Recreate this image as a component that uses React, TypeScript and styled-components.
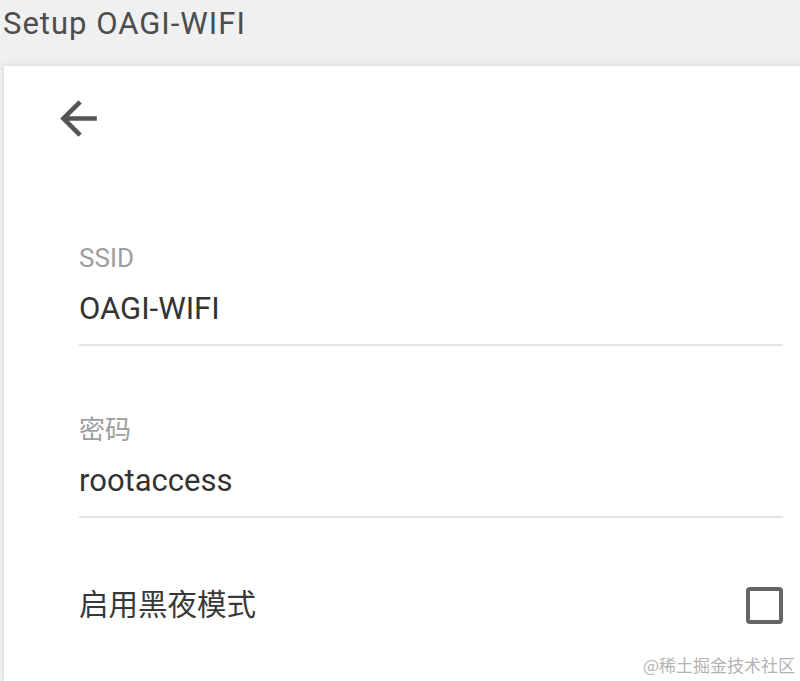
import React from "react";
import styled, { createGlobalStyle } from "styled-components";

const GlobalStyle = createGlobalStyle`
  html, body {
    margin: 0;
    padding: 0;
    background: #f0f0f0;
    overflow: hidden;
  }
  body {
    font-family: Roboto, "Noto Sans CJK SC", sans-serif;
  }
`;

const Page = styled.div`
  position: relative;
  width: 800px;
  height: 681px;
  display: flex;
  flex-direction: column;
  background: #f0f0f0;
  overflow: hidden;
`;

const Header = styled.header`
  height: 66px;
  flex: none;
  display: flex;
  align-items: flex-start;
  padding: 8px 0 0 3px;
  box-sizing: border-box;
`;

const Title = styled.h1`
  margin: 0;
  font-size: 31px;
  line-height: 31px;
  font-weight: 400;
  letter-spacing: 1px;
  color: #4d4d4d;
`;

const Card = styled.main`
  flex: 1;
  margin-left: 4px;
  margin-right: -10px;
  background: #ffffff;
  box-shadow: 0 -2px 6px rgba(0, 0, 0, 0.07), -1px 0 2px rgba(0, 0, 0, 0.06);
  display: flex;
  flex-direction: column;
  padding: 25px 27px 0 47px;
`;

const BackButton = styled.button`
  width: 55px;
  height: 55px;
  padding: 0;
  border: none;
  background: transparent;
  color: #555555;
  display: flex;
  align-items: center;
  justify-content: center;
  cursor: pointer;
`;

const Form = styled.div`
  display: flex;
  flex-direction: column;
  padding-left: 28px;
  margin-top: 30px;
`;

const Field = styled.div<{ $top: number }>`
  display: flex;
  flex-direction: column;
  margin-top: ${(p) => p.$top}px;
  padding-bottom: 17px;
  border-bottom: 2px solid #e3e3e3;
`;

const Label = styled.label`
  font-size: 26px;
  line-height: 32px;
  color: #9e9e9e;
`;

const Value = styled.div`
  margin-top: 17px;
  font-size: 31px;
  line-height: 36px;
  color: #333333;
`;

const ToggleRow = styled.div`
  margin-top: 68px;
  height: 38px;
  display: flex;
  align-items: center;
  justify-content: space-between;
`;

const ToggleLabel = styled.span`
  font-size: 29.5px;
  line-height: 38px;
  color: #383838;
`;

const Checkbox = styled.span`
  width: 37px;
  height: 37px;
  box-sizing: border-box;
  border: 4px solid #666666;
  border-radius: 4px;
`;

const Watermark = styled.div`
  position: absolute;
  right: 5px;
  bottom: 5px;
  font-family: "Noto Sans CJK SC", sans-serif;
  font-size: 17px;
  line-height: 22px;
  color: #b3b3b3;
`;

export default function App() {
  return (
    <>
      <GlobalStyle />
      <Page>
        <Header>
          <Title>Setup OAGI-WIFI</Title>
        </Header>
        <Card>
          <BackButton aria-label="back">
            <svg width="55" height="55" viewBox="0 0 24 24" fill="currentColor">
              <path d="M20 11H7.83l5.59-5.59L12 4l-8 8 8 8 1.41-1.41L7.83 13H20v-2z" />
            </svg>
          </BackButton>
          <Form>
            <Field $top={66}>
              <Label>SSID</Label>
              <Value>OAGI-WIFI</Value>
            </Field>
            <Field $top={68}>
              <Label>密码</Label>
              <Value>rootaccess</Value>
            </Field>
            <ToggleRow>
              <ToggleLabel>启用黑夜模式</ToggleLabel>
              <Checkbox />
            </ToggleRow>
          </Form>
        </Card>
        <Watermark>@稀土掘金技术社区</Watermark>
      </Page>
    </>
  );
}
